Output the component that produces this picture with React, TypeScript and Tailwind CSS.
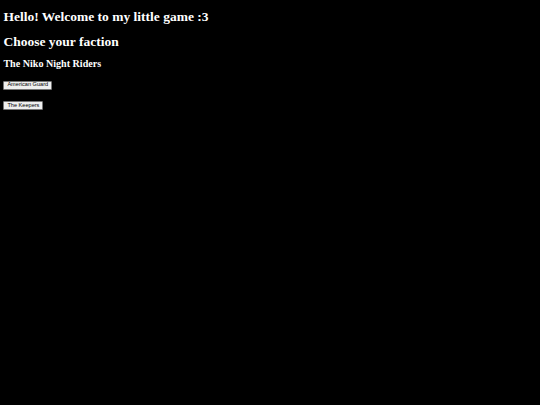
export default function App() {
  return (
    <div className="min-h-screen bg-black px-[3.4px] py-[0.1px] text-white font-['Liberation_Serif',serif]">
      <h1 className="mt-[9px] mb-[9px] text-[13.5px] leading-[15.4px] font-bold">
        Hello! Welcome to my little game :3
      </h1>
      <h1 className="mt-[9px] mb-[9px] text-[13.5px] leading-[15.4px] font-bold">Choose your faction</h1>
      <h2 className="mt-[8.4px] mb-[11.2px] text-[10.08px] leading-[11.6px] font-bold">The Niko Night Riders</h2>
      <div className="flex flex-col items-start gap-[11.4px]">
        <button className="box-border h-[9px] px-[3px] bg-[#efefef] border border-[#767676] rounded-[1px] text-black text-[5.6px] leading-none font-['Liberation_Sans',sans-serif]">
          American Guard
        </button>
        <button className="box-border h-[9px] px-[3px] bg-[#efefef] border border-[#767676] rounded-[1px] text-black text-[5.6px] leading-none font-['Liberation_Sans',sans-serif]">
          The Keepers
        </button>
      </div>
    </div>
  );
}
